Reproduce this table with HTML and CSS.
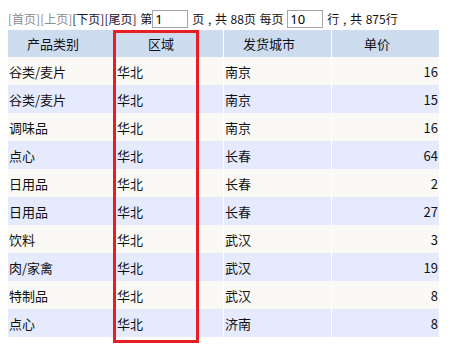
FILE: index.html
```html
<!DOCTYPE html>
<html lang="zh-CN">
<head>
<meta charset="utf-8">
<title>分页表格</title>
<link rel="stylesheet" href="styles.css">
</head>
<body>
<div class="pager">
  <span class="off">[首页]</span><span class="off">[上页]</span><a class="on">[下页]</a><a class="on">[尾页]</a> 第<input class="pg" type="text" value="1"><span class="gap">页 , 共 88页 每页 </span><input class="pg" type="text" value="10"><span class="gap">行 , 共 875行</span>
</div>
<div class="grid-wrap">
  <table class="grid">
    <colgroup><col class="c1"><col class="c2"><col class="c3"><col class="c4"></colgroup>
    <thead>
      <tr><th>产品类别</th><th>区域</th><th>发货城市</th><th>单价</th></tr>
    </thead>
    <tbody>
      <tr><td>谷类/麦片</td><td>华北</td><td>南京</td><td class="num">16</td></tr>
      <tr><td>谷类/麦片</td><td>华北</td><td>南京</td><td class="num">15</td></tr>
      <tr><td>调味品</td><td>华北</td><td>南京</td><td class="num">16</td></tr>
      <tr><td>点心</td><td>华北</td><td>长春</td><td class="num">64</td></tr>
      <tr><td>日用品</td><td>华北</td><td>长春</td><td class="num">2</td></tr>
      <tr><td>日用品</td><td>华北</td><td>长春</td><td class="num">27</td></tr>
      <tr><td>饮料</td><td>华北</td><td>武汉</td><td class="num">3</td></tr>
      <tr><td>肉/家禽</td><td>华北</td><td>武汉</td><td class="num">19</td></tr>
      <tr><td>特制品</td><td>华北</td><td>武汉</td><td class="num">8</td></tr>
      <tr><td>点心</td><td>华北</td><td>济南</td><td class="num">8</td></tr>
    </tbody>
  </table>
  <div class="mark"></div>
</div>
</body>
</html>
```
FILE: styles.css
```css
html, body {
  margin: 0;
  padding: 0;
  background: #ffffff;
}
body {
  box-sizing: border-box;
  min-height: 100vh;
  padding: 8px 8px 12px 8px;
  font-family: "Noto Sans CJK SC", "Noto Sans", sans-serif;
  color: #111;
}
.pager {
  font-size: 12px;
  height: 22px;
  line-height: 20px;
  display: flex;
  align-items: center;
  white-space: pre;
  word-spacing: 1px;
}
.off { color: #8c8c8c; }
.on { color: #1a1030; text-decoration: none; }
.pg {
  box-sizing: border-box;
  width: 36px;
  height: 18px;
  margin: 0;
  padding: 0 2px;
  border: 1px solid #a5a5a5;
  font-family: "Noto Sans", sans-serif;
  font-size: 13px;
  color: #000;
  outline: none;
}
.gap { margin-left: 4px; }
.grid-wrap {
  position: relative;
  width: 431px;
  height: 313px;
}
.grid {
  width: 431px;
  table-layout: fixed;
  border-collapse: separate;
  border-spacing: 0;
  font-size: 13px;
}
.c1 { width: 107px; }
.c2, .c3, .c4 { width: 108px; }
.grid th, .grid td {
  padding: 0 1px;
  white-space: nowrap;
  color: #111;
  overflow: hidden;
}
.grid th + th, .grid td + td { border-left: 1px solid #ffffff; }
.grid th {
  font-weight: normal;
  background: #cedcf0;
  text-align: center;
  padding-right: 18px;
  line-height: 27px;
}
.grid td {
  text-align: left;
  padding-top: 2px;
  line-height: 26px;
}
.grid tbody tr:nth-child(odd) td { background: #faf9f5; }
.grid tbody tr:nth-child(even) td { background: #e5eafd; }
.grid td.num { text-align: right; }
.mark {
  position: absolute;
  left: 105px;
  top: 0;
  width: 86px;
  height: 313px;
  box-sizing: border-box;
  border: 3px solid #e81e25;
}
```
